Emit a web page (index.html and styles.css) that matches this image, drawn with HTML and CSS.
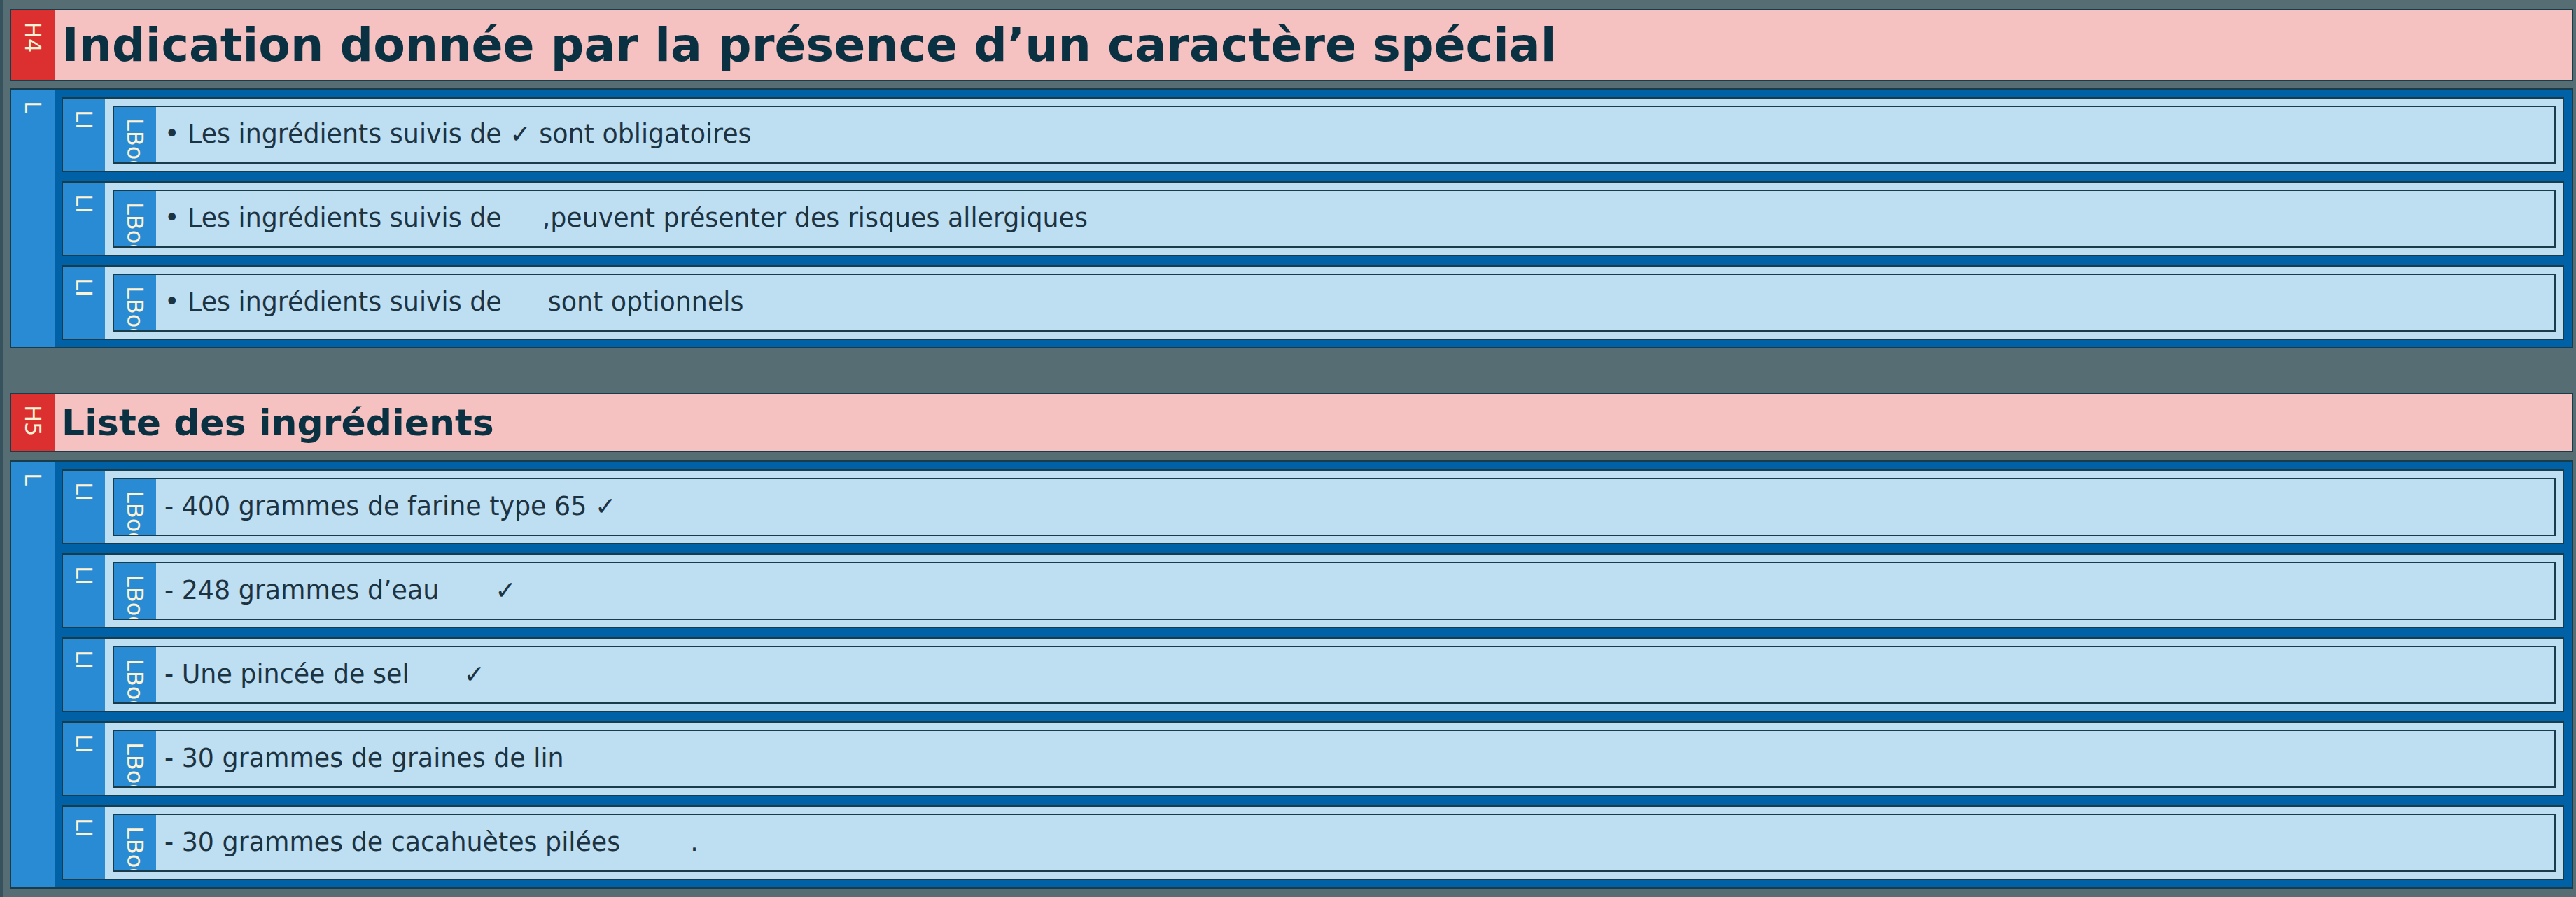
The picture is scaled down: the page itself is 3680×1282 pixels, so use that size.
FILE: index.html
```html
<!DOCTYPE html>
<html lang="fr">
<head>
<meta charset="utf-8">
<title>Structure</title>
<link rel="stylesheet" href="styles.css">
</head>
<body>
<div class="page">
  <section class="blk head h4">
    <div class="tag tag-l red"><span>H4</span></div>
    <div class="head-body"><h1 class="title t4">Indication donnée par la présence d’un caractère spécial</h1></div>
  </section>

  <section class="blk list">
    <div class="tag tag-l blue"><span>L</span></div>
    <div class="list-body">
      <div class="blk li">
        <div class="tag blue"><span>LI</span></div>
        <div class="li-body">
          <div class="blk lbody">
            <div class="tag blue"><span>LBody</span></div>
            <div class="txt">• Les ingrédients suivis de ✓ sont obligatoires</div>
          </div>
        </div>
      </div>
      <div class="blk li">
        <div class="tag blue"><span>LI</span></div>
        <div class="li-body">
          <div class="blk lbody">
            <div class="tag blue"><span>LBody</span></div>
            <div class="txt">• Les ingrédients suivis de<span class="gap g1"></span>,peuvent présenter des risques allergiques</div>
          </div>
        </div>
      </div>
      <div class="blk li">
        <div class="tag blue"><span>LI</span></div>
        <div class="li-body">
          <div class="blk lbody">
            <div class="tag blue"><span>LBody</span></div>
            <div class="txt">• Les ingrédients suivis de<span class="gap g2"></span>sont optionnels</div>
          </div>
        </div>
      </div>
    </div>
  </section>

  <section class="blk head h5">
    <div class="tag tag-l red"><span>H5</span></div>
    <div class="head-body"><h2 class="title t5">Liste des ingrédients</h2></div>
  </section>

  <section class="blk list list2">
    <div class="tag tag-l blue"><span>L</span></div>
    <div class="list-body">
      <div class="blk li">
        <div class="tag blue"><span>LI</span></div>
        <div class="li-body">
          <div class="blk lbody">
            <div class="tag blue"><span>LBody</span></div>
            <div class="txt">- 400 grammes de farine type 65 ✓</div>
          </div>
        </div>
      </div>
      <div class="blk li">
        <div class="tag blue"><span>LI</span></div>
        <div class="li-body">
          <div class="blk lbody">
            <div class="tag blue"><span>LBody</span></div>
            <div class="txt">- 248 grammes d’eau<span class="gap g4"></span>✓</div>
          </div>
        </div>
      </div>
      <div class="blk li">
        <div class="tag blue"><span>LI</span></div>
        <div class="li-body">
          <div class="blk lbody">
            <div class="tag blue"><span>LBody</span></div>
            <div class="txt">- Une pincée de sel<span class="gap g5"></span>✓</div>
          </div>
        </div>
      </div>
      <div class="blk li">
        <div class="tag blue"><span>LI</span></div>
        <div class="li-body">
          <div class="blk lbody">
            <div class="tag blue"><span>LBody</span></div>
            <div class="txt">- 30 grammes de graines de lin</div>
          </div>
        </div>
      </div>
      <div class="blk li">
        <div class="tag blue"><span>LI</span></div>
        <div class="li-body">
          <div class="blk lbody">
            <div class="tag blue"><span>LBody</span></div>
            <div class="txt">- 30 grammes de cacahuètes pilées<span class="gap g3"></span>.</div>
          </div>
        </div>
      </div>
    </div>
  </section>
</div>
</body>
</html>
```

FILE: styles.css
```css
html, body {
  margin: 0;
  padding: 0;
}
body {
  background: #576d74;
  border-left: 5px solid #36535d;
  min-height: 1282px;
  box-sizing: border-box;
  font-family: "DejaVu Sans", "Liberation Sans", sans-serif;
}
.page {
  padding: 13px 4px 8px 9px;
  display: flex;
  flex-direction: column;
}
.blk {
  display: flex;
  border: 2px solid #183c49;
  box-sizing: border-box;
}
.tag {
  width: 60px;
  flex: none;
  display: flex;
  justify-content: center;
  align-items: flex-start;
  padding-top: 16px;
  box-sizing: border-box;
  overflow: hidden;
}
.tag-l { width: 62px; }
.tag span {
  writing-mode: vertical-rl;
  font-family: "DejaVu Sans", sans-serif;
  font-size: 32px;
  line-height: 1;
  color: #fff3d4;
  white-space: nowrap;
}
.red { background: #dc2f2f; }
.blue { background: #2a8bd5; }

.head { background: #f5c2c1; }
.h4 { height: 103px; }
.h5 { height: 85px; margin-top: 63px; }
.head-body {
  flex: 1;
  display: flex;
  align-items: center;
  padding-left: 10px;
}
.title {
  margin: 0;
  font-weight: bold;
  color: #0a3142;
  white-space: nowrap;
  line-height: 1;
}
.t4 { font-size: 66.5px; }
.t5 { font-size: 52px; }

.list {
  margin-top: 10px;
  background: #0061a6;
}
.list2 { margin-top: 12px; }
.list-body {
  flex: 1;
  padding: 11px 11px 10px 10px;
  display: flex;
  flex-direction: column;
  gap: 13px;
}
.li {
  background: #bedef2;
  height: 107px;
}
.li-body {
  flex: 1;
  padding: 10px 10px 10px 11px;
}
.lbody {
  height: 83px;
  background: #bedef2;
}
.txt {
  flex: 1;
  display: flex;
  align-items: center;
  padding-left: 12px;
  padding-bottom: 2px;
  font-size: 36.4px;
  color: #1c3342;
  white-space: pre;
}
.gap { display: inline-block; }
.g1 { width: 58px; }
.g2 { width: 66px; }
.g3 { width: 100px; }
.g4 { width: 80px; }
.g5 { width: 78px; }
```
